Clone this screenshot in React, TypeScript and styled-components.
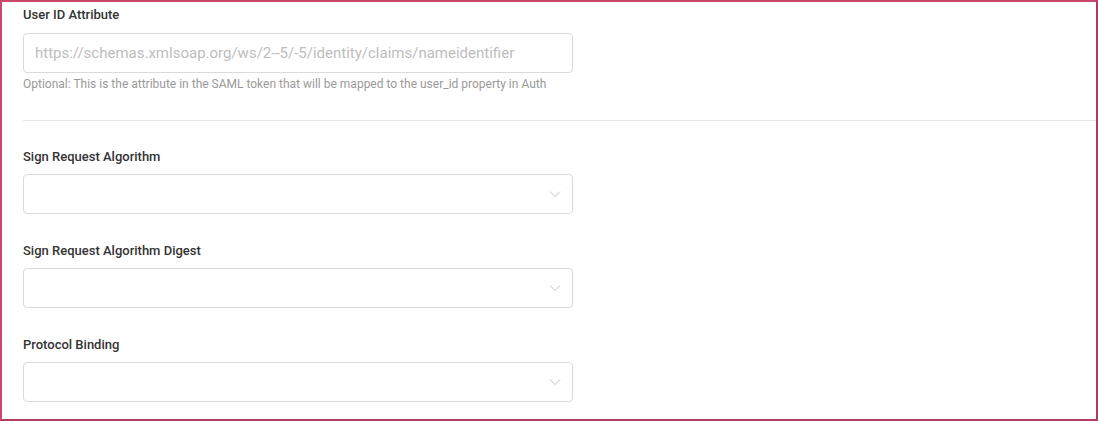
import styled, {createGlobalStyle} from 'styled-components';

const GlobalStyle = createGlobalStyle`
  html, body {
    margin: 0;
    padding: 0;
    background: #ffffff;
  }
  body {
    font-family: Roboto, "Liberation Sans", Arial, sans-serif;
    color: #333333;
  }
  * {
    box-sizing: border-box;
  }
`;

const Frame = styled('div')`
  width: 1098px;
  height: 421px;
  border-style: solid;
  border-width: 2px;
  border-color: #cb476b #b03b5c #b03b5c #cb476b;
  padding: 5px 0 0 21px;
  overflow: hidden;
`;

const Field = styled('div')<{$gap?: number}>`
  display: flex;
  flex-direction: column;
  margin-top: ${(p) => p.$gap ?? 0}px;
`;

const Label = styled('label')<{$space?: number}>`
  font-size: 13px;
  line-height: 16px;
  font-weight: 500;
  color: #333333;
  margin-bottom: ${(p) => p.$space ?? 10}px;
`;

const TextInput = styled('input')`
  width: 550px;
  height: 40px;
  border: 1px solid #dadada;
  border-radius: 4px;
  padding: 0 11px;
  font-family: Roboto, "Liberation Sans", Arial, sans-serif;
  font-size: 15px;
  color: #333333;
  outline: none;
  &::placeholder {
    color: #bdbdbd;
  }
`;

const Help = styled('div')`
  font-size: 12px;
  line-height: 16px;
  color: #9a9a9a;
  margin-top: 3px;
`;

const Divider = styled('hr')`
  border: none;
  border-top: 1px solid #e6e6e6;
  margin: 28px 0 0 0;
  height: 0;
`;

const SelectBox = styled('div')`
  width: 550px;
  height: 40px;
  border: 1px solid #dadada;
  border-radius: 4px;
  display: flex;
  align-items: center;
  justify-content: flex-end;
  padding-right: 11px;
`;

const Chevron = () => (
  <svg width="12" height="8" viewBox="0 0 12 8" fill="none">
    <path d="M1 1.5 L6 6.5 L11 1.5" stroke="#c2c2c2" strokeWidth="1" />
  </svg>
);

const selects = [
  'Sign Request Algorithm',
  'Sign Request Algorithm Digest',
  'Protocol Binding',
];

const App = () => {
  return (
    <>
      <GlobalStyle />
      <Frame>
        <Field>
          <Label>User ID Attribute</Label>
          <TextInput placeholder="https://schemas.xmlsoap.org/ws/2--5/-5/identity/claims/nameidentifier" />
          <Help>
            Optional: This is the attribute in the SAML token that will be
            mapped to the user_id property in Auth
          </Help>
        </Field>
        <Divider />
        {selects.map((name, i) => (
          <Field key={name} $gap={i === 0 ? 28 : 29}>
            <Label $space={9}>{name}</Label>
            <SelectBox>
              <Chevron />
            </SelectBox>
          </Field>
        ))}
      </Frame>
    </>
  );
};

export default App;
